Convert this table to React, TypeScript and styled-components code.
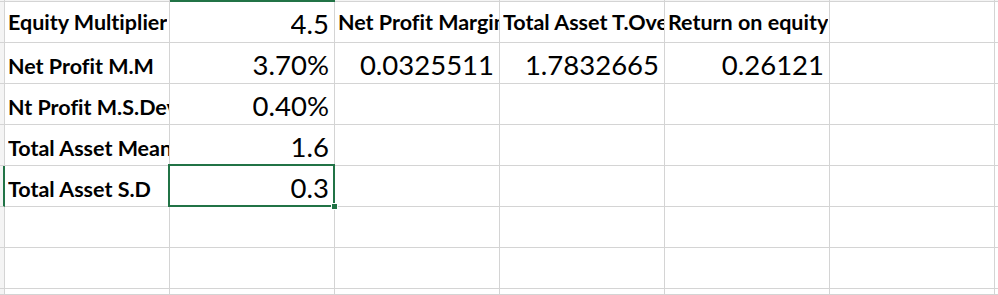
import styled, { createGlobalStyle, css } from "styled-components";

const GlobalStyle = createGlobalStyle`
  html, body {
    margin: 0;
    padding: 0;
    background: #ffffff;
  }
  body {
    width: 998px;
    height: 295px;
    overflow: hidden;
    font-family: Lato, "Open Sans", sans-serif;
  }
`;

const GRID = "#d4d4d4";
const GREEN = "#217346";

const Sheet = styled.div`
  display: grid;
  grid-template-columns: 5px repeat(6, 165px) 1fr;
  grid-template-rows: 2px repeat(7, 41px) 1fr;
  width: 998px;
  height: 295px;
  background: #ffffff;
`;

const Corner = styled.div`
  background: #f4f4f4;
  border-right: 1px solid ${GRID};
  border-bottom: 1px solid ${GRID};
  box-sizing: border-box;
`;

const ColEdge = styled.div<{ $active?: boolean }>`
  box-sizing: border-box;
  border-bottom: 1px solid ${GRID};
  border-right: 1px solid ${GRID};
  background: #f4f4f4;
  ${(p) =>
    p.$active &&
    css`
      background: ${GREEN};
      border: none;
    `}
`;

const RowEdge = styled.div<{ $active?: boolean }>`
  box-sizing: border-box;
  background: #f4f4f4;
  border-bottom: 1px solid ${GRID};
  border-right: 1px solid ${GRID};
  ${(p) =>
    p.$active &&
    css`
      border-right: 2px solid ${GREEN};
    `}
`;

const Cell = styled.div<{ $num?: boolean; $center?: boolean; $selected?: boolean }>`
  position: relative;
  box-sizing: border-box;
  border-right: 1px solid ${GRID};
  border-bottom: 1px solid ${GRID};
  display: flex;
  align-items: ${(p) => (p.$center ? "center" : "flex-end")};
  justify-content: ${(p) => (p.$num ? "flex-end" : "flex-start")};
  padding: ${(p) => (p.$num ? "0 5px 2px 0" : "0 0 5px 3px")};
  overflow: hidden;
  white-space: nowrap;
  color: #000000;
  font-family: Lato, "Open Sans", sans-serif;
  font-variant-ligatures: none;
  font-size: ${(p) => (p.$num ? "27.5px" : "21.5px")};
  font-weight: ${(p) => (p.$num ? 400 : 700)};
  line-height: ${(p) => (p.$num ? "32px" : "24px")};
  ${(p) =>
    p.$center &&
    css`
      padding-bottom: 0;
    `}
  ${(p) =>
    p.$selected &&
    css`
      overflow: visible;
      &::after {
        content: "";
        position: absolute;
        top: -2px;
        left: -2px;
        right: -1px;
        bottom: -1px;
        border: 2px solid ${GREEN};
        pointer-events: none;
      }
      &::before {
        content: "";
        position: absolute;
        right: -4px;
        bottom: -4px;
        width: 5px;
        height: 5px;
        background: ${GREEN};
        border: 1px solid #ffffff;
        z-index: 2;
      }
    `}
`;

const Clip = styled.span`
  overflow: hidden;
`;

type CellData = { text?: string; num?: boolean; center?: boolean };

const rows: CellData[][] = [
  [
    { text: "Equity Multiplier", center: true },
    { text: "4.5", num: true },
    { text: "Net Profit Margin", center: true },
    { text: "Total Asset T.Over", center: true },
    { text: "Return on equity", center: true },
    {},
    {},
  ],
  [
    { text: "Net Profit M.M" },
    { text: "3.70%", num: true },
    { text: "0.0325511", num: true },
    { text: "1.7832665", num: true },
    { text: "0.26121", num: true },
    {},
    {},
  ],
  [{ text: "Nt Profit M.S.Dev" }, { text: "0.40%", num: true }, {}, {}, {}, {}, {}],
  [{ text: "Total Asset Mean" }, { text: "1.6", num: true }, {}, {}, {}, {}, {}],
  [{ text: "Total Asset S.D" }, { text: "0.3", num: true }, {}, {}, {}, {}, {}],
  [{}, {}, {}, {}, {}, {}, {}],
  [{}, {}, {}, {}, {}, {}, {}],
  [{}, {}, {}, {}, {}, {}, {}],
];

const selectedRow = 4;
const selectedCol = 1;

export default function App() {
  return (
    <>
      <GlobalStyle />
      <Sheet>
        <Corner />
        {Array.from({ length: 7 }).map((_, c) => (
          <ColEdge key={`h${c}`} $active={c === selectedCol} />
        ))}
        {rows.map((row, r) => (
          <>
            <RowEdge key={`r${r}`} $active={r === selectedRow} />
            {row.map((cell, c) => (
              <Cell
                key={`${r}-${c}`}
                $num={cell.num}
                $center={cell.center}
                $selected={r === selectedRow && c === selectedCol}
              >
                {cell.text && <Clip>{cell.text}</Clip>}
              </Cell>
            ))}
          </>
        ))}
      </Sheet>
    </>
  );
}
